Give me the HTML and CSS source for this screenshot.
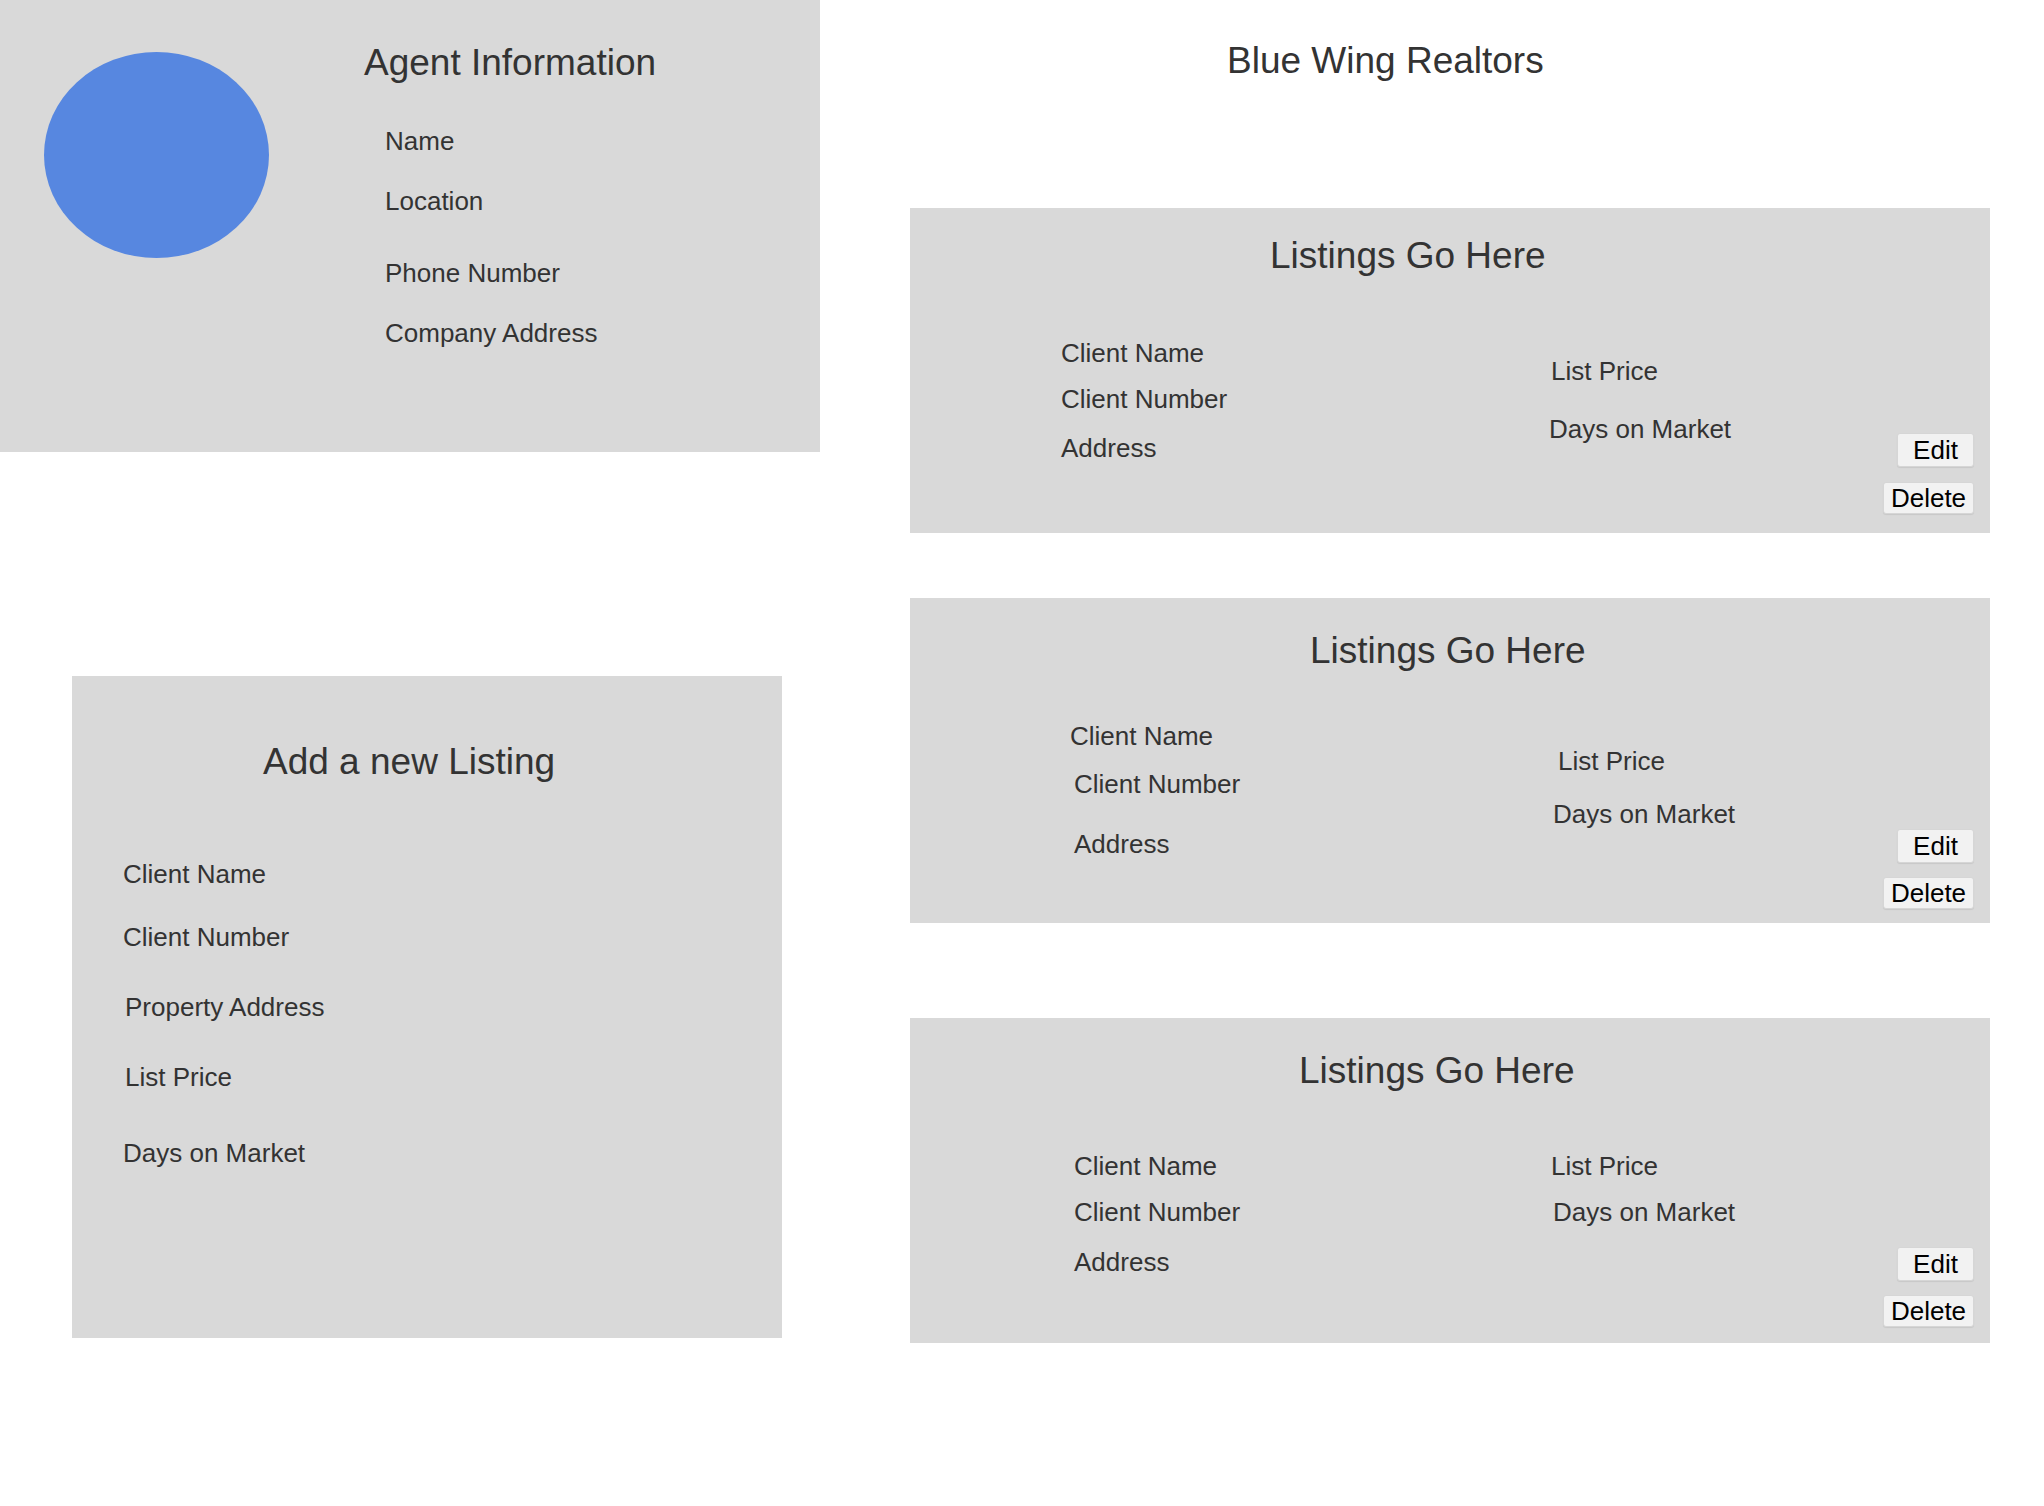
FILE: index.html
```html
<!DOCTYPE html>
<html lang="en">
<head>
<meta charset="utf-8">
<title>Blue Wing Realtors</title>
<link rel="stylesheet" href="styles.css">
</head>
<body>
<div class="page">
  <div class="left-col">
    <section class="agent-panel">
      <div class="avatar"></div>
      <div class="agent-info">
        <h2 class="agent-title">Agent Information</h2>
        <p class="agent-field f-name">Name</p>
        <p class="agent-field f-location">Location</p>
        <p class="agent-field f-phone">Phone Number</p>
        <p class="agent-field f-address">Company Address</p>
      </div>
    </section>
    <section class="add-panel">
      <h2 class="add-title">Add a new Listing</h2>
      <p class="add-field a-1">Client Name</p>
      <p class="add-field a-2">Client Number</p>
      <p class="add-field a-3">Property Address</p>
      <p class="add-field a-4">List Price</p>
      <p class="add-field a-5">Days on Market</p>
    </section>
  </div>
  <div class="right-col">
    <h1 class="brand">Blue Wing Realtors</h1>

    <article class="listing listing-1">
      <h2 class="listing-title">Listings Go Here</h2>
      <div class="listing-body">
        <div class="col-client">
          <p class="lf c-1">Client Name</p>
          <p class="lf c-2">Client Number</p>
          <p class="lf c-3">Address</p>
        </div>
        <div class="col-market">
          <p class="lf m-1">List Price</p>
          <p class="lf m-2">Days on Market</p>
        </div>
        <div class="listing-actions">
          <button class="btn btn-edit" type="button">Edit</button>
          <button class="btn btn-delete" type="button">Delete</button>
        </div>
      </div>
    </article>

    <article class="listing listing-2">
      <h2 class="listing-title">Listings Go Here</h2>
      <div class="listing-body">
        <div class="col-client">
          <p class="lf c-1">Client Name</p>
          <p class="lf c-2">Client Number</p>
          <p class="lf c-3">Address</p>
        </div>
        <div class="col-market">
          <p class="lf m-1">List Price</p>
          <p class="lf m-2">Days on Market</p>
        </div>
        <div class="listing-actions">
          <button class="btn btn-edit" type="button">Edit</button>
          <button class="btn btn-delete" type="button">Delete</button>
        </div>
      </div>
    </article>

    <article class="listing listing-3">
      <h2 class="listing-title">Listings Go Here</h2>
      <div class="listing-body">
        <div class="col-client">
          <p class="lf c-1">Client Name</p>
          <p class="lf c-2">Client Number</p>
          <p class="lf c-3">Address</p>
        </div>
        <div class="col-market">
          <p class="lf m-1">List Price</p>
          <p class="lf m-2">Days on Market</p>
        </div>
        <div class="listing-actions">
          <button class="btn btn-edit" type="button">Edit</button>
          <button class="btn btn-delete" type="button">Delete</button>
        </div>
      </div>
    </article>
  </div>
</div>
</body>
</html>
```

FILE: styles.css
```css
* { box-sizing: border-box; }

html, body {
  margin: 0;
  padding: 0;
  background: #ffffff;
}

body {
  font-family: "Liberation Sans", Arial, Helvetica, sans-serif;
  color: #333333;
}

h1, h2, p { margin: 0; font-weight: normal; }

.page {
  display: flex;
  align-items: flex-start;
  width: 2044px;
  min-height: 1506px;
}

/* ---------- left column ---------- */
.left-col {
  width: 820px;
  flex: none;
  display: flex;
  flex-direction: column;
}

.agent-panel {
  width: 820px;
  height: 452px;
  background: #d9d9d9;
  display: flex;
  align-items: flex-start;
}

.avatar {
  width: 225px;
  height: 206px;
  margin: 52px 0 0 44px;
  border-radius: 50%;
  background: #5787e0;
  flex: none;
}

.agent-info {
  margin-left: 95px;
  padding-top: 44px;
}

.agent-title {
  font-size: 37px;
  line-height: 37px;
}

.agent-field {
  font-size: 26px;
  line-height: 26px;
  padding-left: 21px;
}

.f-name { margin-top: 47px; }
.f-location { margin-top: 34px; }
.f-phone { margin-top: 46px; }
.f-address { margin-top: 34px; }

.add-panel {
  width: 710px;
  height: 662px;
  margin: 224px 0 0 72px;
  background: #d9d9d9;
  padding-top: 67px;
}

.add-title {
  font-size: 37px;
  line-height: 37px;
  padding-left: 191px;
}

.add-field {
  font-size: 26px;
  line-height: 26px;
  padding-left: 51px;
}

.a-1 { margin-top: 81px; }
.a-2 { margin-top: 37px; }
.a-3 { margin-top: 44px; padding-left: 53px; }
.a-4 { margin-top: 44px; padding-left: 53px; }
.a-5 { margin-top: 50px; }

/* ---------- right column ---------- */
.right-col {
  margin-left: 90px;
  width: 1080px;
  flex: none;
  display: flex;
  flex-direction: column;
}

.brand {
  font-size: 37px;
  line-height: 37px;
  padding: 42px 0 0 317px;
}

.listing {
  height: 325px;
  background: #d9d9d9;
  padding-top: var(--ht);
  padding-right: 16px;
}

.listing-1 {
  margin-top: 129px;
  --ht: 29px; --hl: 360px;
  --ml: 641px;
  --cx1: 151px; --cx2: 151px; --cx3: 151px;
  --c1: 66px; --c2: 20px; --c3: 23px;
  --mx1: 0px; --mx2: -2px;
  --m1: 84px; --m2: 32px;
  --b1: 159px; --b2: 15px;
}

.listing-2 {
  margin-top: 65px;
  --ht: 34px; --hl: 400px;
  --ml: 648px;
  --cx1: 160px; --cx2: 164px; --cx3: 164px;
  --c1: 54px; --c2: 22px; --c3: 34px;
  --mx1: 0px; --mx2: -5px;
  --m1: 79px; --m2: 27px;
  --b1: 160px; --b2: 14px;
}

.listing-3 {
  margin-top: 95px;
  --ht: 34px; --hl: 389px;
  --ml: 641px;
  --cx1: 164px; --cx2: 164px; --cx3: 164px;
  --c1: 64px; --c2: 20px; --c3: 24px;
  --mx1: 0px; --mx2: 2px;
  --m1: 64px; --m2: 20px;
  --b1: 158px; --b2: 14px;
}

.listing-title {
  font-size: 37px;
  line-height: 37px;
  padding-left: var(--hl);
}

.listing-body {
  display: grid;
  grid-template-columns: var(--ml) 1fr auto;
  align-items: start;
}

.lf {
  font-size: 26px;
  line-height: 26px;
  white-space: nowrap;
}

.col-client .c-1 { margin-top: var(--c1); padding-left: var(--cx1); }
.col-client .c-2 { margin-top: var(--c2); padding-left: var(--cx2); }
.col-client .c-3 { margin-top: var(--c3); padding-left: var(--cx3); }

.col-market .m-1 { margin-top: var(--m1); margin-left: var(--mx1); }
.col-market .m-2 { margin-top: var(--m2); margin-left: var(--mx2); }

.listing-actions {
  display: flex;
  flex-direction: column;
  align-items: flex-end;
  padding-top: var(--b1);
  gap: var(--b2);
}

.btn {
  font-family: "Liberation Sans", Arial, Helvetica, sans-serif;
  font-size: 26px;
  line-height: 26px;
  color: #000000;
  background: #f2f2f2;
  border: 1px solid #d6d6d6;
  border-radius: 3px;
  padding: 0;
  text-align: center;
  box-shadow: 0 1px 1px rgba(0, 0, 0, 0.08);
}

.btn-edit { width: 77px; height: 34px; }
.btn-delete { width: 91px; height: 32px; }
```
